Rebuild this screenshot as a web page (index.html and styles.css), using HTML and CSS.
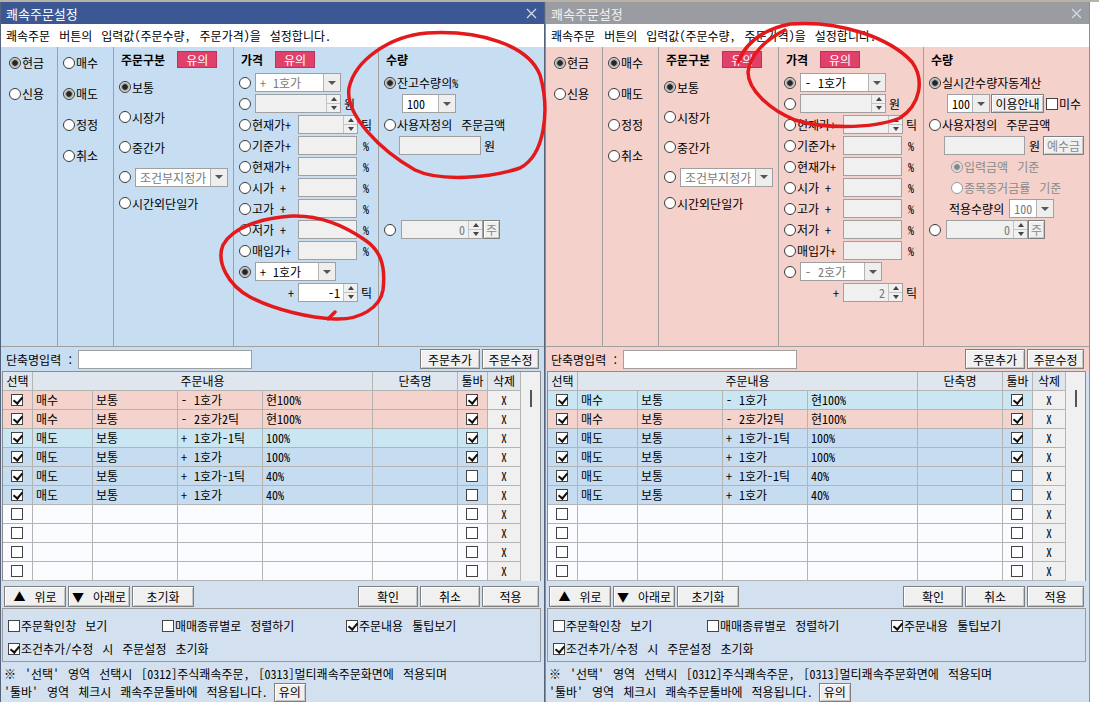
FILE: index.html
```html
<!DOCTYPE html>
<html lang="ko">
<head>
    <meta charset="UTF-8">
    <meta name="viewport" content="width=device-width, initial-scale=1.0">
    <title>쾌속주문설정</title>
    <link rel="stylesheet" href="styles.css">
    <script>
        // 주문 목록 : [행색, 매매, 구분, 가격, 수량, 툴바]
        var listA = [
            ["pk", "매수", "보통", "- 1호가", "현100%", 1],
            ["pk", "매수", "보통", "- 2호가2틱", "현100%", 1],
            ["sel", "매도", "보통", "+ 1호가-1틱", "100%", 1],
            ["bl", "매도", "보통", "+ 1호가", "100%", 1],
            ["bl", "매도", "보통", "+ 1호가-1틱", "40%", 0],
            ["bl", "매도", "보통", "+ 1호가", "40%", 0]
        ];
        var listB = [
            ["sel", "매수", "보통", "- 1호가", "현100%", 1],
            ["pk", "매수", "보통", "- 2호가2틱", "현100%", 1],
            ["bl", "매도", "보통", "+ 1호가-1틱", "100%", 1],
            ["bl", "매도", "보통", "+ 1호가", "100%", 1],
            ["bl", "매도", "보통", "+ 1호가-1틱", "40%", 0],
            ["bl", "매도", "보통", "+ 1호가", "40%", 0]
        ];

        function fillList(id, list){
            var html = "";
            for(var i=0; i<10; i++){
                var r = list[i];
                if(r){
                    html += "<div class='row " + r[0] + "'>";
                    html += "<span class='cell mid'><i class='ck on'></i></span>";
                    html += "<span class='cell'>" + r[1] + "</span>";
                    html += "<span class='cell'>" + r[2] + "</span>";
                    html += "<span class='cell'>" + r[3] + "</span>";
                    html += "<span class='cell'>" + r[4] + "</span>";
                    html += "<span class='cell'></span>";
                    html += "<span class='cell mid'><i class='ck" + (r[5] ? " on" : "") + "'></i></span>";
                } else {
                    html += "<div class='row'>";
                    html += "<span class='cell mid'><i class='ck'></i></span>";
                    html += "<span class='cell'></span><span class='cell'></span><span class='cell'></span>";
                    html += "<span class='cell'></span><span class='cell'></span>";
                    html += "<span class='cell mid'><i class='ck'></i></span>";
                }
                html += "<span class='cell del'>X</span></div>";
            }
            document.getElementById(id).innerHTML = html;
        }

        window.onload = function(){
            fillList("listA", listA);
            fillList("listB", listB);
        }
    </script>
</head>
<body>
<div class="desk">

    <!-- 매도 설정 창 -->
    <div class="dlg">
        <div class="title">
            <span>쾌속주문설정</span>
            <svg class="close" width="11" height="11" viewBox="0 0 11 11"><path d="M1 1L10 10M10 1L1 10"/></svg>
        </div>
        <div class="sub">쾌속주문 버튼의 입력값(주문수량, 주문가격)을 설정합니다.</div>

        <div class="setup">
            <div class="col c1">
                <div class="opt"><i class="rd on"></i>현금</div>
                <div class="opt"><i class="rd"></i>신용</div>
            </div>
            <div class="col c2">
                <div class="opt"><i class="rd"></i>매수</div>
                <div class="opt"><i class="rd on"></i>매도</div>
                <div class="opt"><i class="rd"></i>정정</div>
                <div class="opt"><i class="rd"></i>취소</div>
            </div>
            <div class="col c3">
                <div class="hd">주문구분<span class="badge">유의</span></div>
                <div class="opt"><i class="rd on"></i>보통</div>
                <div class="opt"><i class="rd"></i>시장가</div>
                <div class="opt"><i class="rd"></i>중간가</div>
                <div class="opt"><i class="rd"></i><div class="combo w93 dim"><span>조건부지정가</span><b class="dd"></b></div></div>
                <div class="opt"><i class="rd"></i>시간외단일가</div>
            </div>
            <div class="col c4">
                <div class="hd">가격<span class="badge">유의</span></div>
                <div class="ln"><i class="rd"></i><div class="combo w86 dim"><span>+ 1호가</span><b class="dd"></b></div></div>
                <div class="ln"><i class="rd"></i><div class="spin w86"><span></span><b class="arrows"><i></i><i></i></b></div><span class="unit">원</span></div>
                <div class="ln"><i class="rd"></i><span class="lb">현재가+</span><div class="spin w60"><span></span><b class="arrows"><i></i><i></i></b></div><span class="unit">틱</span></div>
                <div class="ln"><i class="rd"></i><span class="lb">기준가+</span><span class="box w59"></span><span class="pct">%</span></div>
                <div class="ln"><i class="rd"></i><span class="lb">현재가+</span><span class="box w59"></span><span class="pct">%</span></div>
                <div class="ln"><i class="rd"></i><span class="lb">시가 +</span><span class="box w59"></span><span class="pct">%</span></div>
                <div class="ln"><i class="rd"></i><span class="lb">고가 +</span><span class="box w59"></span><span class="pct">%</span></div>
                <div class="ln"><i class="rd"></i><span class="lb">저가 +</span><span class="box w59"></span><span class="pct">%</span></div>
                <div class="ln"><i class="rd"></i><span class="lb">매입가+</span><span class="box w59"></span><span class="pct">%</span></div>
                <div class="ln"><i class="rd on"></i><div class="combo w81"><span>+ 1호가</span><b class="dd"></b></div></div>
                <div class="ln"><span class="plus">+</span><div class="spin live w60"><span>-1</span><b class="arrows"><i></i><i></i></b></div><span class="unit">틱</span></div>
            </div>
            <div class="col c5">
                <div class="hd">수량</div>
                <div class="ln"><i class="rd on"></i>잔고수량의%</div>
                <div class="ln in"><div class="combo w54"><span>100</span><b class="dd"></b></div></div>
                <div class="ln"><i class="rd"></i>사용자정의 주문금액</div>
                <div class="ln in"><span class="box w82"></span><span class="unit">원</span></div>
                <div class="ln"></div>
                <div class="ln"></div>
                <div class="ln"></div>
                <div class="ln"><i class="rd"></i><div class="spin w82 ml4"><span>0</span><b class="arrows"><i></i><i></i></b></div><span class="btn sm dimt">주</span></div>
            </div>
        </div>

        <div class="namebar">
            <span class="nm">단축명입력 :</span>
            <span class="field"></span>
            <span class="btn b60 push">주문추가</span>
            <span class="btn b57">주문수정</span>
        </div>

        <div class="grid">
            <div class="gmain">
                <div class="ghead">
                    <span class="cell mid">선택</span>
                    <span class="cell mid">주문내용</span>
                    <span class="cell mid">단축명</span>
                    <span class="cell mid">툴바</span>
                    <span class="cell mid">삭제</span>
                </div>
                <div id="listA"></div>
            </div>
            <div class="vscroll"><i></i></div>
        </div>

        <div class="btnbar">
            <span class="btn b62">▲ 위로</span>
            <span class="btn b62">▼ 아래로</span>
            <span class="btn b62">초기화</span>
            <span class="btn b60 push">확인</span>
            <span class="btn b60">취소</span>
            <span class="btn b57">적용</span>
        </div>

        <div class="opts">
            <div class="chks">
                <span class="chk c154"><i class="ck"></i>주문확인창 보기</span>
                <span class="chk c184"><i class="ck"></i>매매종류별로 정렬하기</span>
                <span class="chk"><i class="ck on"></i>주문내용 툴팁보기</span>
            </div>
            <div class="chks">
                <span class="chk"><i class="ck on"></i>조건추가/수정 시 주문설정 초기화</span>
            </div>
        </div>

        <div class="foot">
            <div>※ '선택' 영역 선택시 [0312]주식쾌속주문, [0313]멀티쾌속주문화면에 적용되며</div>
            <div>'툴바' 영역 체크시 쾌속주문툴바에 적용됩니다.<span class="btn b32">유의</span></div>
        </div>
    </div>

    <!-- 매수 설정 창 -->
    <div class="dlg buy off">
        <div class="title">
            <span>쾌속주문설정</span>
            <svg class="close" width="11" height="11" viewBox="0 0 11 11"><path d="M1 1L10 10M10 1L1 10"/></svg>
        </div>
        <div class="sub">쾌속주문 버튼의 입력값(주문수량, 주문가격)을 설정합니다.</div>

        <div class="setup">
            <div class="col c1">
                <div class="opt"><i class="rd on"></i>현금</div>
                <div class="opt"><i class="rd"></i>신용</div>
            </div>
            <div class="col c2">
                <div class="opt"><i class="rd on"></i>매수</div>
                <div class="opt"><i class="rd"></i>매도</div>
                <div class="opt"><i class="rd"></i>정정</div>
                <div class="opt"><i class="rd"></i>취소</div>
            </div>
            <div class="col c3">
                <div class="hd">주문구분<span class="badge">유의</span></div>
                <div class="opt"><i class="rd on"></i>보통</div>
                <div class="opt"><i class="rd"></i>시장가</div>
                <div class="opt"><i class="rd"></i>중간가</div>
                <div class="opt"><i class="rd"></i><div class="combo w93 dim"><span>조건부지정가</span><b class="dd"></b></div></div>
                <div class="opt"><i class="rd"></i>시간외단일가</div>
            </div>
            <div class="col c4">
                <div class="hd">가격<span class="badge">유의</span></div>
                <div class="ln"><i class="rd on"></i><div class="combo w86"><span>- 1호가</span><b class="dd"></b></div></div>
                <div class="ln"><i class="rd"></i><div class="spin w86"><span></span><b class="arrows"><i></i><i></i></b></div><span class="unit">원</span></div>
                <div class="ln"><i class="rd"></i><span class="lb">현재가+</span><div class="spin w60"><span></span><b class="arrows"><i></i><i></i></b></div><span class="unit">틱</span></div>
                <div class="ln"><i class="rd"></i><span class="lb">기준가+</span><span class="box w59"></span><span class="pct">%</span></div>
                <div class="ln"><i class="rd"></i><span class="lb">현재가+</span><span class="box w59"></span><span class="pct">%</span></div>
                <div class="ln"><i class="rd"></i><span class="lb">시가 +</span><span class="box w59"></span><span class="pct">%</span></div>
                <div class="ln"><i class="rd"></i><span class="lb">고가 +</span><span class="box w59"></span><span class="pct">%</span></div>
                <div class="ln"><i class="rd"></i><span class="lb">저가 +</span><span class="box w59"></span><span class="pct">%</span></div>
                <div class="ln"><i class="rd"></i><span class="lb">매입가+</span><span class="box w59"></span><span class="pct">%</span></div>
                <div class="ln"><i class="rd"></i><div class="combo w82 dim"><span>- 2호가</span><b class="dd"></b></div></div>
                <div class="ln"><span class="plus">+</span><div class="spin w60"><span>2</span><b class="arrows"><i></i><i></i></b></div><span class="unit">틱</span></div>
            </div>
            <div class="col c5">
                <div class="hd">수량</div>
                <div class="ln"><i class="rd on"></i>실시간수량자동계산</div>
                <div class="ln in"><div class="combo w43"><span>100</span><b class="dd"></b></div><span class="btn b53 ml1">이용안내</span><i class="ck ml2"></i>미수</div>
                <div class="ln"><i class="rd"></i>사용자정의 주문금액</div>
                <div class="ln in"><span class="box w81"></span><span class="unit ml4">원</span><span class="btn b41 ml3 dimt">예수금</span></div>
                <div class="ln sub2 dimt"><i class="rd dim on"></i>입력금액 기준</div>
                <div class="ln sub2 dimt"><i class="rd dim"></i>종목증거금률 기준</div>
                <div class="ln sub3">적용수량의<div class="combo w45 dim ml5"><span>100</span><b class="dd"></b></div></div>
                <div class="ln"><i class="rd"></i><div class="spin w82 ml4"><span>0</span><b class="arrows"><i></i><i></i></b></div><span class="btn sm dimt">주</span></div>
            </div>
        </div>

        <div class="namebar">
            <span class="nm">단축명입력 :</span>
            <span class="field"></span>
            <span class="btn b60 push">주문추가</span>
            <span class="btn b57">주문수정</span>
        </div>

        <div class="grid">
            <div class="gmain">
                <div class="ghead">
                    <span class="cell mid">선택</span>
                    <span class="cell mid">주문내용</span>
                    <span class="cell mid">단축명</span>
                    <span class="cell mid">툴바</span>
                    <span class="cell mid">삭제</span>
                </div>
                <div id="listB"></div>
            </div>
            <div class="vscroll"><i></i></div>
        </div>

        <div class="btnbar">
            <span class="btn b62">▲ 위로</span>
            <span class="btn b62">▼ 아래로</span>
            <span class="btn b62">초기화</span>
            <span class="btn b60 push">확인</span>
            <span class="btn b60">취소</span>
            <span class="btn b57">적용</span>
        </div>

        <div class="opts">
            <div class="chks">
                <span class="chk c154"><i class="ck"></i>주문확인창 보기</span>
                <span class="chk c184"><i class="ck"></i>매매종류별로 정렬하기</span>
                <span class="chk"><i class="ck on"></i>주문내용 툴팁보기</span>
            </div>
            <div class="chks">
                <span class="chk"><i class="ck on"></i>조건추가/수정 시 주문설정 초기화</span>
            </div>
        </div>

        <div class="foot">
            <div>※ '선택' 영역 선택시 [0312]주식쾌속주문, [0313]멀티쾌속주문화면에 적용되며</div>
            <div>'툴바' 영역 체크시 쾌속주문툴바에 적용됩니다.<span class="btn b32">유의</span></div>
        </div>
    </div>

    <!-- 빨간 펜 표시 -->
    <svg class="marks" width="1099" height="710" viewBox="0 0 1099 710">
        <path d="M427 33C390 36 355 60 349 88C345 115 380 150 415 170C440 182 490 178 520 168C545 155 550 110 540 75C528 45 480 30 427 33"/>
        <path d="M292 216C260 218 232 228 223 245C216 262 228 285 250 297C275 310 310 318 335 319C360 320 380 308 383 290C386 265 380 250 365 240C345 226 322 215 292 216M328 319L335 312"/>
        <path d="M738 62C745 45 760 30 790 24C840 20 890 38 912 62C925 80 920 105 900 118C870 130 820 128 795 120C770 110 748 90 748 72C750 55 765 40 785 30"/>
    </svg>
</div>
</body>
</html>
```

FILE: styles.css
```css
*{
    box-sizing: border-box;
}

body{
    margin: 0;
    background-color: #fff;
    font-family: "Noto Sans Mono CJK KR", "Noto Sans CJK KR", sans-serif;
    font-size: 12px;
    word-spacing: 3px;
    color: #000;
}

.desk{
    position: relative;
    display: flex;
    width: 1099px;
    height: 710px;
    padding-top: 2px;
    background: linear-gradient(#b8b3a4 0 2px, #fff 2px);
}

/* 창 */
.dlg{
    width: 545px;
    height: 700px;
    display: flex;
    flex-direction: column;
    border-left: 1px solid #54647f;
    border-right: 1px solid #54647f;
    background-color: #d3e0ef;
}
.dlg.off{
    border-color: #8d8f93;
}

.title{
    flex: none;
    height: 22px;
    display: flex;
    align-items: center;
    justify-content: space-between;
    padding: 0 7px 0 5px;
    background-color: #3b5895;
    color: #fff;
    font-size: 13px;
}
.dlg.off .title{
    background-color: #9a9ca1;
    color: #f3f3f3;
}
.close path{
    stroke: #d3dbea;
    stroke-width: 1.2;
}

.sub{
    flex: none;
    height: 23px;
    line-height: 23px;
    padding-left: 5px;
    background-color: #fff;
    white-space: nowrap;
}

/* 설정 영역 */
.setup{
    flex: none;
    display: flex;
    height: 300px;
    background-color: #c7ddf1;
    border-bottom: 1px solid #a0a0a0;
}
.buy .setup, .buy .namebar{
    background-color: #f4d1cb;
}

.col{
    border-right: 1px solid #a0a0a0;
    padding-left: 5px;
}
.col:last-child{
    flex: 1;
    border-right: 0;
}
.c1{ width: 57px; padding-left: 8px; }
.c2{ width: 56px; }
.c3{ width: 120px; }
.c4{ width: 145px; }

.hd{
    height: 25px;
    display: flex;
    align-items: center;
    padding-left: 2px;
    font-weight: bold;
}
.badge{
    width: 40px;
    height: 17px;
    margin-left: 12px;
    background-color: #e0416b;
    border: 1px solid #c22f58;
    color: #fff;
    font-weight: normal;
    text-align: center;
    line-height: 15px;
}

.opt, .ln{
    display: flex;
    align-items: center;
    white-space: nowrap;
}
.c1 .opt, .c2 .opt{ height: 31px; }
.c3 .opt{ height: 30px; }
.c3 .opt:last-child{ height: 22px; }
.ln{ height: 21px; }
.ln.in{ padding-left: 15px; }
.ln.sub2{ padding-left: 22px; }
.ln.sub3{ padding-left: 20px; }

.dimt{ color: #8a8a8a; }

/* 라디오, 체크 */
.rd{
    flex: none;
    width: 12px;
    height: 12px;
    margin-right: 1px;
    border-radius: 50%;
    border: 1px solid #3a3a3a;
    background-color: #fff;
}
.rd.on{
    background: radial-gradient(circle, #262626 0 2.4px, #8f8f8f 3px, #dcdcdc 4.5px);
}
.rd.dim{
    border-color: #999;
}
.rd.dim.on{
    background: radial-gradient(circle, #868686 0 2.4px, #c2c2c2 3px, #e6e6e6 4.5px);
}

.ck{
    position: relative;
    flex: none;
    display: inline-block;
    width: 12px;
    height: 12px;
    margin-right: 1px;
    border: 1px solid #444;
    background-color: #fff;
}
.ck.on::after{
    content: "";
    position: absolute;
    left: 3px;
    top: 0;
    width: 4px;
    height: 7px;
    border: solid #111;
    border-width: 0 2px 2px 0;
    transform: rotate(40deg);
}

/* 콤보, 입력칸 */
.combo{
    flex: none;
    display: flex;
    height: 19px;
    margin-left: 3px;
    border: 1px solid #a0a0a0;
    background-color: #fff;
}
.combo span{
    flex: 1;
    padding-left: 4px;
    line-height: 17px;
    word-spacing: 1px;
    overflow: hidden;
}
.combo.dim span{ color: #7a7a7a; }
.dd{
    flex: none;
    width: 17px;
    display: flex;
    align-items: center;
    justify-content: center;
    border-left: 1px solid #b4b4b4;
    background-color: #eeeeee;
}
.dd::after{
    content: "";
    border-left: 4px solid transparent;
    border-right: 4px solid transparent;
    border-top: 4px solid #555;
}

.spin{
    flex: none;
    display: flex;
    height: 19px;
    margin-left: 3px;
    border: 1px solid #a0a0a0;
    background-color: #f0f0f0;
}
.spin.live{ background-color: #fff; }
.spin span{
    flex: 1;
    padding-right: 3px;
    text-align: right;
    line-height: 17px;
    color: #7a7a7a;
}
.spin.live span{ color: #000; }
.arrows{
    flex: none;
    width: 14px;
    display: flex;
    flex-direction: column;
    border-left: 1px solid #c4c4c4;
}
.arrows i{
    flex: 1;
    display: flex;
    align-items: center;
    justify-content: center;
    background-color: #f0f0f0;
}
.arrows i + i{ border-top: 1px solid #c4c4c4; }
.arrows i:first-child::after{
    content: "";
    border-left: 3px solid transparent;
    border-right: 3px solid transparent;
    border-bottom: 4px solid #444;
}
.arrows i:last-child::after{
    content: "";
    border-left: 3px solid transparent;
    border-right: 3px solid transparent;
    border-top: 4px solid #444;
}

.box{
    flex: none;
    height: 19px;
    border: 1px solid #a0a0a0;
    background-color: #f0f0f0;
}
.lb{
    flex: none;
    width: 46px;
    word-spacing: 0;
}
.lb + .spin{ margin-left: 0; }
.unit{ margin-left: 3px; }
.pct{ margin-left: 6px; }
.plus{
    width: 59px;
    padding-right: 4px;
    text-align: right;
}
.plus + .spin{ margin-left: 0; }

.w43{ width: 43px; }
.w45{ width: 45px; }
.w54{ width: 54px; }
.w59{ width: 59px; }
.w60{ width: 60px; }
.w81{ width: 81px; }
.w82{ width: 82px; }
.w86{ width: 86px; }
.w93{ width: 93px; }
.ml1{ margin-left: 1px; }
.ml2{ margin-left: 2px; }
.ml3{ margin-left: 3px; }
.ml4{ margin-left: 4px; }
.ml5{ margin-left: 5px; }

/* 버튼 */
.btn{
    flex: none;
    display: inline-flex;
    align-items: center;
    justify-content: center;
    height: 20px;
    border: 1px solid #7f7f7f;
    background-color: #f0f0f0;
    box-shadow: inset 1px 1px #fff, inset -1px -1px #c6c6c6;
    white-space: nowrap;
}
.btn.sm{ width: 17px; height: 19px; }
.b32{ width: 32px; height: 19px; margin-left: 6px; }
.b41{ width: 41px; height: 19px; }
.b53{ width: 53px; height: 19px; }
.b57{ width: 57px; }
.b60{ width: 60px; }
.b62{ width: 62px; }
.push{ margin-left: auto; }

/* 단축명 */
.namebar{
    flex: none;
    display: flex;
    align-items: center;
    gap: 2px;
    height: 24px;
    padding: 0 5px;
    background-color: #c7ddf1;
}
.nm{
    flex: none;
    width: 70px;
    white-space: nowrap;
    word-spacing: 0;
}
.field{
    width: 174px;
    height: 19px;
    border: 1px solid #a0a0a0;
    background-color: #fff;
}

/* 주문 목록 */
.grid{
    flex: none;
    display: flex;
    width: 539px;
    height: 210px;
    margin-left: 1px;
    border: 1px solid #8c8c8c;
    border-bottom: 0;
    background-color: #fafcff;
}
.gmain{ width: 518px; }
.ghead, .row{
    display: grid;
    height: 19px;
}
.ghead{
    grid-template-columns: 30px 340px 85px 30px 33px;
    background-color: #dfe6ee;
}
.row{
    grid-template-columns: 30px 60px 85px 85px 110px 85px 30px 33px;
}
.row.pk{ background-color: #f5d3cd; }
.row.sel{ background-color: #c9e6f2; }
.row.bl{ background-color: #c6dcf0; }
.cell{
    padding-left: 3px;
    border-right: 1px solid #b4b4b4;
    border-bottom: 1px solid #b4b4b4;
    line-height: 18px;
    word-spacing: 1px;
    white-space: nowrap;
    overflow: hidden;
}
.cell.mid{
    display: flex;
    align-items: center;
    justify-content: center;
    padding: 0;
}
.cell.del{
    padding: 0;
    background-color: #f0f0f0;
    text-align: center;
    font-size: 11px;
}
.vscroll{
    position: relative;
    flex: 1;
    background-color: #f0f0f0;
}
.vscroll i{
    position: absolute;
    left: 9px;
    top: 18px;
    width: 2px;
    height: 17px;
    background-color: #555;
}

/* 하단 */
.btnbar{
    flex: none;
    display: flex;
    gap: 2px;
    height: 27px;
    padding: 5px 5px 0 3px;
}
.btnbar .btn{ height: 21px; }

.opts{
    flex: none;
    height: 54px;
    margin: 0 3px 0 1px;
    padding: 5px 0 0 5px;
    border: 1px solid #9a9a9a;
}
.chks{
    display: flex;
    height: 23px;
}
.chk{
    display: flex;
    align-items: center;
    white-space: nowrap;
}
.c154{ width: 154px; }
.c184{ width: 184px; }

.foot{
    flex: 1;
    padding: 3px 0 0 3px;
    line-height: 18px;
    white-space: nowrap;
}
.foot div{
    display: flex;
    align-items: center;
    height: 18px;
}

/* 빨간 펜 */
.marks{
    position: absolute;
    left: 0;
    top: 0;
    pointer-events: none;
}
.marks path{
    fill: none;
    stroke: #e4191b;
    stroke-width: 3.5;
    stroke-linecap: round;
    stroke-linejoin: round;
}
```
